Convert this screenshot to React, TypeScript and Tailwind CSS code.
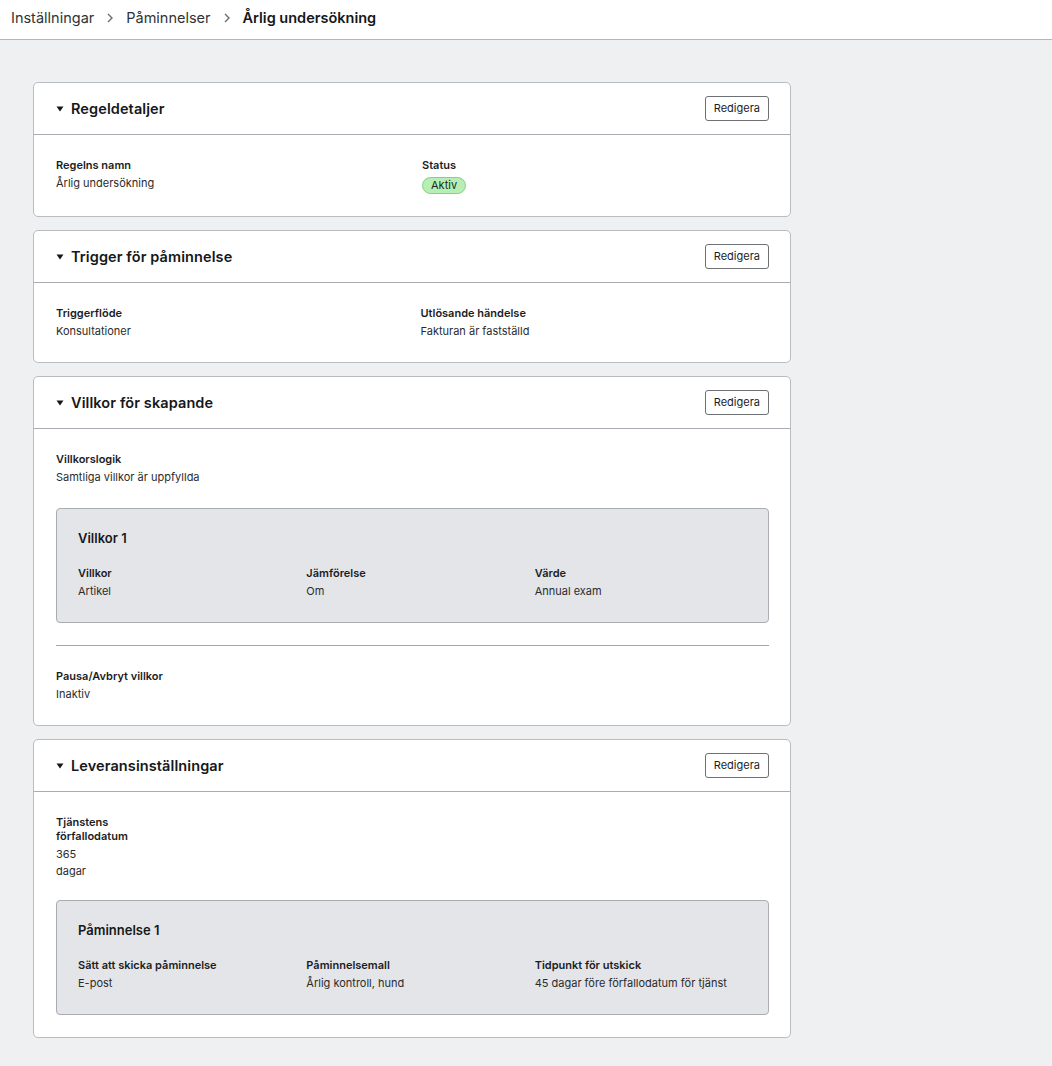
import React from "react";

const font = { fontFamily: "Inter, 'Noto Sans', sans-serif" };

function Field({ label, value, className = "" }: { label: string; value: React.ReactNode; className?: string }) {
  return (
    <div className={className}>
      <div className="text-[11px] leading-[14px] font-semibold text-[#1b1d1f] mb-[3px]">{label}</div>
      <div className="text-[11px] leading-[17px] text-[#2a2c2e]">{value}</div>
    </div>
  );
}

function Section({ title, children }: { title: string; children: React.ReactNode }) {
  return (
    <section className="bg-white border border-[#b9bdc1] rounded-[5px]">
      <div className="h-[52px] flex items-center justify-between pl-[22px] pr-[21px] border-b border-[#a9adb1]">
        <div className="flex items-center gap-[7px]">
          <svg width="8" height="6" viewBox="0 0 8 6" className="mt-[1px]">
            <path d="M0.5 0.5 L7.5 0.5 L4 5.5 Z" fill="#16181a" />
          </svg>
          <h2 className="text-[14.5px] font-semibold text-[#16181a] tracking-[0.1px]">{title}</h2>
        </div>
        <button className="h-[25px] px-[8px] border border-[#6d7175] rounded-[3px] text-[11px] text-[#1b1d1f] bg-white">
          Redigera
        </button>
      </div>
      <div className="pl-[22px] pr-[21px] pt-[23px] pb-[22px]">{children}</div>
    </section>
  );
}

function GrayBox({ title, items }: { title: string; items: [string, string][] }) {
  return (
    <div className="bg-[#e3e5e9] border border-[#a9adb2] rounded-[4px] px-[21px] pt-[19px] pb-[22px]">
      <div className="text-[13px] leading-[20px] font-semibold text-[#16181a] mb-[18px]">{title}</div>
      <div className="grid grid-cols-3 gap-x-[16px]">
        {items.map(([l, v]) => (
          <Field key={l} label={l} value={v} />
        ))}
      </div>
    </div>
  );
}

export default function App() {
  return (
    <div className="min-h-[1066px] bg-[#eef0f1]" style={font}>
      <header className="h-[40px] bg-white border-b border-[#b3b6b9] flex items-center pl-[11px] pb-[3px] text-[14.5px]">
        <span className="text-[#303336]">Inställningar</span>
        <svg width="16" height="16" viewBox="0 0 16 16" className="mx-[8px]">
          <path d="M6 4 L10 8 L6 12" fill="none" stroke="#6b6f73" strokeWidth="1.4" />
        </svg>
        <span className="text-[#303336]">Påminnelser</span>
        <svg width="16" height="16" viewBox="0 0 16 16" className="mx-[8px]">
          <path d="M6 4 L10 8 L6 12" fill="none" stroke="#6b6f73" strokeWidth="1.4" />
        </svg>
        <span className="font-semibold text-[#16181a]">Årlig undersökning</span>
      </header>

      <main className="pt-[42px] pl-[33px] pb-[28px]">
        <div className="w-[758px] flex flex-col gap-[13px]">
          <Section title="Regeldetaljer">
            <div className="grid grid-cols-2 gap-x-[19px]">
              <Field label="Regelns namn" value="Årlig undersökning" />
              <div>
                <div className="text-[11px] leading-[14px] font-semibold text-[#1b1d1f] mb-[3px]">Status</div>
                <div className="flex pt-[2px]">
                  <span className="flex items-center h-[17px] px-[8px] rounded-full bg-[#b6eeb3] border border-[#86cf86] text-[11px] leading-[15px] text-[#1b2a1b]">
                    Aktiv
                  </span>
                </div>
              </div>
            </div>
          </Section>

          <Section title="Trigger för påminnelse">
            <div className="grid grid-cols-2 gap-x-[16px]">
              <Field label="Triggerflöde" value="Konsultationer" />
              <Field label="Utlösande händelse" value="Fakturan är fastställd" />
            </div>
          </Section>

          <Section title="Villkor för skapande">
            <div className="flex flex-col gap-[22px]">
              <Field label="Villkorslogik" value="Samtliga villkor är uppfyllda" />
              <GrayBox
                title="Villkor 1"
                items={[
                  ["Villkor", "Artikel"],
                  ["Jämförelse", "Om"],
                  ["Värde", "Annual exam"],
                ]}
              />
              <div className="border-t border-[#a3a6aa]" />
              <Field className="-mt-[1px] pt-[2px]" label="Pausa/Avbryt villkor" value="Inaktiv" />
            </div>
          </Section>

          <Section title="Leveransinställningar">
            <div className="flex flex-col gap-[20px]">
              <Field className="w-[50px] whitespace-normal" label="Tjänstens förfallodatum" value="365 dagar" />
              <GrayBox
                title="Påminnelse 1"
                items={[
                  ["Sätt att skicka påminnelse", "E-post"],
                  ["Påminnelsemall", "Årlig kontroll, hund"],
                  ["Tidpunkt för utskick", "45 dagar före förfallodatum för tjänst"],
                ]}
              />
            </div>
          </Section>
        </div>
      </main>
    </div>
  );
}
